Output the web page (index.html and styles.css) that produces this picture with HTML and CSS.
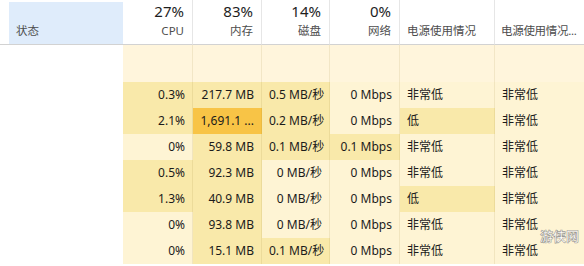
FILE: index.html
```html
<!DOCTYPE html>
<html lang="zh-CN">
<head>
  <meta charset="UTF-8">
  <title>任务管理器</title>
  <link rel="stylesheet" href="styles.css">
</head>
<body>
  <div class="grid">
    <div class="head status"><span class="label">状态</span></div>
    <div class="head num"><span class="pct">27%</span><span class="label">CPU</span></div>
    <div class="head num"><span class="pct">83%</span><span class="label">内存</span></div>
    <div class="head num"><span class="pct">14%</span><span class="label">磁盘</span></div>
    <div class="head num"><span class="pct">0%</span><span class="label">网络</span></div>
    <div class="head text"><span class="label">电源使用情况</span></div>
    <div class="head text last"><span class="label">电源使用情况...</span></div>

    <div class="cell blank first"></div>
    <div class="cell c0"></div>
    <div class="cell c0"></div>
    <div class="cell c0"></div>
    <div class="cell c0"></div>
    <div class="cell c0"></div>
    <div class="cell c0"></div>

    <div class="cell blank"></div>
    <div class="cell num c2">0.3%</div>
    <div class="cell num c2">217.7 MB</div>
    <div class="cell num c2">0.5 MB/秒</div>
    <div class="cell num c1">0 Mbps</div>
    <div class="cell txt c1">非常低</div>
    <div class="cell txt c1">非常低</div>

    <div class="cell blank"></div>
    <div class="cell num c2">2.1%</div>
    <div class="cell num c4">1,691.1 ...</div>
    <div class="cell num c2">0.2 MB/秒</div>
    <div class="cell num c1">0 Mbps</div>
    <div class="cell txt c2">低</div>
    <div class="cell txt c1">非常低</div>

    <div class="cell blank"></div>
    <div class="cell num c1">0%</div>
    <div class="cell num c2">59.8 MB</div>
    <div class="cell num c2">0.1 MB/秒</div>
    <div class="cell num c2">0.1 Mbps</div>
    <div class="cell txt c1">非常低</div>
    <div class="cell txt c1">非常低</div>

    <div class="cell blank"></div>
    <div class="cell num c2">0.5%</div>
    <div class="cell num c2">92.3 MB</div>
    <div class="cell num c1">0 MB/秒</div>
    <div class="cell num c1">0 Mbps</div>
    <div class="cell txt c1">非常低</div>
    <div class="cell txt c1">非常低</div>

    <div class="cell blank"></div>
    <div class="cell num c2">1.3%</div>
    <div class="cell num c2">40.9 MB</div>
    <div class="cell num c1">0 MB/秒</div>
    <div class="cell num c1">0 Mbps</div>
    <div class="cell txt c2">低</div>
    <div class="cell txt c1">非常低</div>

    <div class="cell blank"></div>
    <div class="cell num c1">0%</div>
    <div class="cell num c2">93.8 MB</div>
    <div class="cell num c1">0 MB/秒</div>
    <div class="cell num c1">0 Mbps</div>
    <div class="cell txt c1">非常低</div>
    <div class="cell txt c1">非常低</div>

    <div class="cell blank"></div>
    <div class="cell num c1">0%</div>
    <div class="cell num c2">15.1 MB</div>
    <div class="cell num c2">0.1 MB/秒</div>
    <div class="cell num c1">0 Mbps</div>
    <div class="cell txt c1">非常低</div>
    <div class="cell txt c1">非常低</div>
  </div>

  <div class="watermark">游侠网</div>
</body>
</html>
```

FILE: styles.css
```css
body {
  margin: 0;
  background: #fff;
  font-family: "Noto Sans", "Noto Sans CJK SC", sans-serif;
  color: #1b1b1b;
  overflow: hidden;
}
.grid {
  display: grid;
  grid-template-columns: 9px 114px 70px 69px 68px 70px 95px 89px;
  grid-template-rows: 45px 37px repeat(7, 26px);
  width: 584px;
}
.head {
  display: flex;
  flex-direction: column;
  justify-content: flex-end;
  padding: 2px 8px 5px 7px;
  border-bottom: 1px solid #d2d2d2;
  border-right: 1px solid #e6e6e6;
  box-sizing: border-box;
  white-space: nowrap;
  overflow: hidden;
}
.grid::before {
  content: "";
  border-bottom: 1px solid #d2d2d2;
}
.head.status {
  margin-top: 2px;
  background: #dfecfb;
  border-right: none;
  padding-left: 7px;
}
.head.num {
  align-items: flex-end;
}
.head.text {
  padding-left: 7px;
}
.head.last {
  border-right: none;
  padding-right: 0;
  padding-left: 6px;
}
.head.last .label {
  letter-spacing: -0.3px;
}
.pct {
  font-size: 15px;
  line-height: 20px;
  color: #1e1e1e;
  margin-bottom: 2px;
}
.label {
  font-size: 11.5px;
  line-height: 16px;
  color: #4d4d4d;
}
.cell {
  font-size: 12px;
  line-height: 26px;
  white-space: nowrap;
  padding: 0 7px;
  border-right: 1px solid rgba(150, 120, 40, 0.12);
}
.grid > .cell:nth-child(7n + 7) {
  border-right: none;
}
.cell.blank {
  grid-column: 1 / 3;
  background: #fff;
  border-right: none;
}
.num {
  text-align: right;
}
.c0 {
  background: #fff5dc;
}
.c1 {
  background: #fef4d4;
}
.c2 {
  background: #f9e9aa;
}
.c4 {
  background: #f8c446;
}
.watermark {
  position: absolute;
  left: 540px;
  top: 226px;
  font-family: "Noto Sans CJK SC", sans-serif;
  font-size: 13px;
  font-weight: bold;
  color: rgba(255, 255, 255, 0.9);
  -webkit-text-stroke: 0.6px rgba(110, 110, 110, 0.7);
}
```
